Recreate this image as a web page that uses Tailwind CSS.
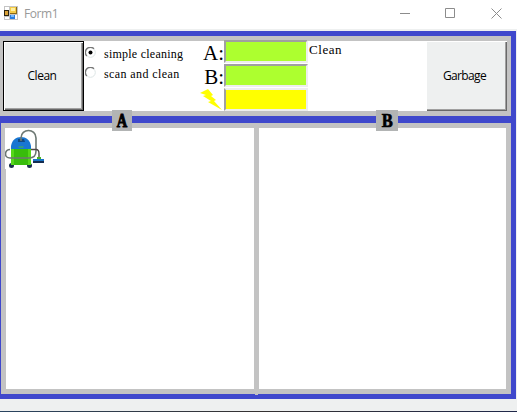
<!DOCTYPE html>
<html lang="en">
<head>
<meta charset="utf-8">
<title>Form1</title>
<script src="https://cdn.jsdelivr.net/npm/@tailwindcss/browser@4"></script>
</head>
<body class="w-[517px] h-[412px] overflow-hidden bg-[#eef0f0] flex flex-col text-black">
<header class="h-[29px] shrink-0 bg-white flex items-center font-['Open_Sans','Noto_Sans',sans-serif]">
  <svg class="ml-1 mb-[3px] shrink-0" width="14" height="14" viewBox="0 0 14 14" shape-rendering="crispEdges">
    <path fill="#c4c4c4" d="M0 0h14v14H0z"/><path fill="#fff" d="M1 1h4v4H1zM1 11h4v2H1zM11 9h2v4h-2z"/>
    <path fill="#2c2410" d="M0 4h5v6H0z"/><path fill="#d9a036" d="M1 5h3v4H1z"/>
    <path fill="#8b6a18" d="M6 1h7v7H6z"/><path fill="#f4cc48" d="M6 1h6v6H6z"/><path fill="#fff0a0" d="M7 2h4v3H7z"/>
    <path fill="#287de0" d="M6 9h5v4H6z"/><path fill="#75bbff" d="M7 9h3v2H7z"/>
  </svg>
  <span class="ml-[6px] mb-[2px] text-[12px] leading-4 tracking-[-0.4px] text-[#999]">Form1</span>
  <svg class="ml-auto mr-[15px] mb-[3px]" width="102" height="12" viewBox="0 0 102 12" fill="none" stroke="#8c8c8c">
    <path d="M0 6.500h10M45.500 1.500h9v9h-9zM91.500 1.500l10 10M101.500 1.500l-10 10"/>
  </svg>
</header>
<main class="mt-[2px] w-[516px] h-[368px] shrink-0 bg-[#3f48cc] py-[5px] flex flex-col gap-[7px] relative">
  <section class="w-[511px] h-[80px] bg-[#c3c3c3] py-[5px] pl-[3px] pr-1 flex">
    <div class="w-[504px] h-[70px] bg-white flex">
      <button class="w-[81px] h-[70px] border border-black bg-[#eef0f0] shadow-[inset_1px_1px_#fff,inset_-1px_-1px_#696969,inset_-2px_-2px_#a0a0a0] text-[12px] font-['Open_Sans','Noto_Sans',sans-serif] tracking-[-0.5px] pr-[3px]">Clean</button>
      <div class="w-[116px] pt-1 pl-px flex flex-col gap-[4px] font-['Liberation_Serif',serif] text-[12px]">
        <div class="flex h-4 items-center"><svg width="11" height="11" viewBox="0 0 11 11" class="mb-[1px]"><circle cx="5.500" cy="5.500" r="4.800" fill="#fff" stroke="#dde5e5"/><path d="M1.800 9A4.800 4.800 0 0 1 9 1.800" fill="none" stroke="#777" stroke-width="1.400"/><circle cx="5.500" cy="5.500" r="2"/></svg><span class="ml-2 mt-[2px] whitespace-nowrap tracking-[0.24px]">simple cleaning</span></div>
        <div class="flex h-4 items-center"><svg width="11" height="11" viewBox="0 0 11 11" class="mb-[1px]"><circle cx="5.500" cy="5.500" r="4.800" fill="#fff" stroke="#dde5e5"/><path d="M1.800 9A4.800 4.800 0 0 1 9 1.800" fill="none" stroke="#777" stroke-width="1.400"/></svg><span class="ml-2 mt-[2px] whitespace-nowrap tracking-[0.4px]">scan and clean</span></div>
      </div>
      <div class="w-[24px] flex flex-col items-end font-['Liberation_Serif',serif] text-[21px] leading-6">
        <span class="h-6">A:</span><span class="h-6">B:</span>
        <svg class="shrink-0" width="24" height="22" viewBox="0 0 24 22"><path fill="#ff0" d="M0 4L8 0l5 6-2 1 5 4-2 1 8 9-14-8 3-1-8-5 3-1z"/></svg>
      </div>
      <div class="w-[84px] -mt-px flex flex-col gap-px">
        <div class="h-[23px] bg-[#adff2f] border-2 border-t-[#a0a0a0] border-l-[#a0a0a0] border-r-[#eee] border-b-[#eee]"></div>
        <div class="h-[23px] bg-[#adff2f] border-2 border-t-[#a0a0a0] border-l-[#a0a0a0] border-r-[#eee] border-b-[#eee]"></div>
        <div class="h-[23px] bg-[#ff0] border-2 border-t-[#eee] border-l-[#a0a0a0] border-r-[#eee] border-b-[#eee]"></div>
      </div>
      <span class="ml-[1px] mt-[1px] font-['Liberation_Serif',serif] text-[13px] leading-4 tracking-[0.55px]">Clean</span>
      <button class="ml-auto w-[81px] h-[70px] bg-[#eef0f0] shadow-[inset_1px_1px_#fff,inset_-1px_-1px_#696969,inset_-2px_-2px_#a0a0a0] text-[12px] font-['Open_Sans','Noto_Sans',sans-serif] tracking-[-0.65px] pr-1">Garbage</button>
    </div>
  </section>
  <section class="ml-px w-[510px] h-[271px] bg-[#c3c3c3] p-[5px] grid grid-cols-[248px_247px] gap-x-[5px]">
    <div class="bg-white">
      <svg class="-ml-px" width="40" height="41" viewBox="0 0 40 41">
        <path fill="#fff" d="M0 0h40v41H0z"/>
        <circle cx="6.500" cy="37.500" r="2.500" fill="#18304c"/><circle cx="24.500" cy="37.500" r="2.500" fill="#18304c"/>
        <path fill="#1976d2" d="M6 22V18C7 12 11 9 16 9s9 3 10 9v4z"/>
        <path fill="#55d719" d="M6 21h20v16H6z"/><path fill="#38bd0c" d="M9 21h14v16H9z"/>
        <path fill="#124a83" d="M13 11h6l1 3h-7z"/><path d="M13.500 19h5" stroke="#49bd37"/>
        <path d="M16 13V10C16 0 31 0 31 10v13q0 7-7 7H5C-1 30-1 22 5 21.500" fill="none" stroke="#6d7873" stroke-width="1.600"/>
        <path d="M26 21.500h5q3 0 3 4V31" fill="none" stroke="#4f4948" stroke-width="1.400"/>
        <path fill="#48b422" d="M32 29h4v3h-4z"/><path fill="#1976c9" d="M28 31h11v3H28z"/><path fill="#152c4f" d="M28 33h11v2H28z"/>
      </svg>
    </div>
    <div class="bg-white"></div>
  </section>
  <span class="absolute left-[112px] top-[79px] w-5 h-[21px] bg-[#b2b4b4] flex items-center justify-center font-['Liberation_Serif',serif] font-bold text-[19px] leading-none"><span class="scale-x-[.76] [-webkit-text-stroke:1px_black]">A</span></span>
  <span class="absolute left-[376px] top-[79px] w-[22px] h-[21px] bg-[#b2b4b4] flex items-center justify-center font-['Liberation_Serif',serif] font-bold text-[19px] leading-none"><span class="scale-x-[.87] [-webkit-text-stroke:.7px_black]">B</span></span>
  <span class="absolute left-[255px] bottom-1 w-[3px] h-px bg-[#c3c3c3]"></span>
</main>
<footer class="mt-auto h-px bg-gradient-to-r from-[#294460] via-[#353131] to-[#20284a]"></footer>
</body>
</html>
